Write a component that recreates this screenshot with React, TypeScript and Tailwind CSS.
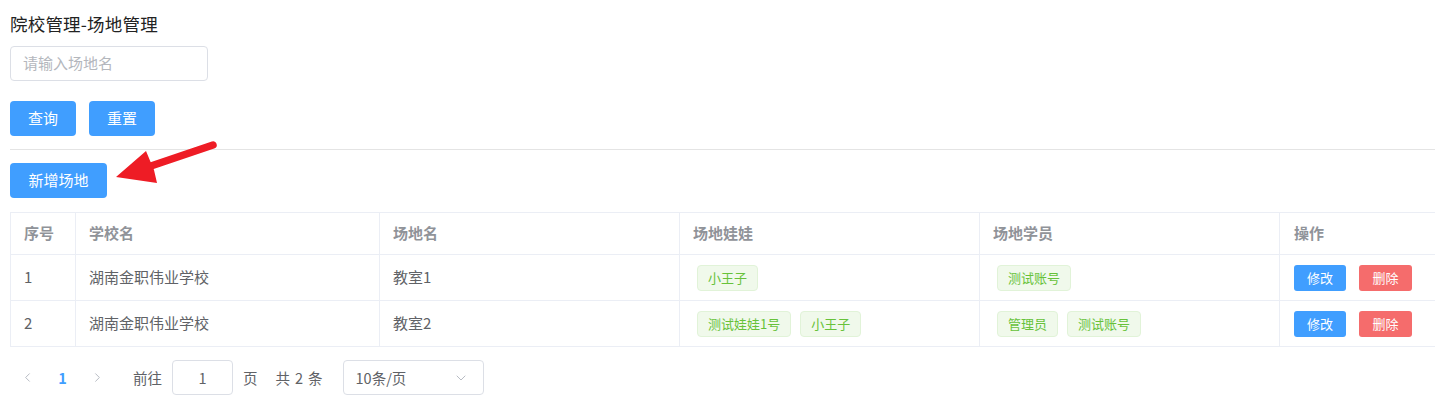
import { ChevronDown, ChevronLeft, ChevronRight } from "lucide-react"

interface Row {
  id: number
  school: string
  room: string
  dolls: string[]
  students: string[]
}

const rows: Row[] = [
  { id: 1, school: "湖南金职伟业学校", room: "教室1", dolls: ["小王子"], students: ["测试账号"] },
  { id: 2, school: "湖南金职伟业学校", room: "教室2", dolls: ["测试娃娃1号", "小王子"], students: ["管理员", "测试账号"] },
]

const font = { fontFamily: '"Noto Sans CJK SC", "Noto Sans", sans-serif' }

function Tag({ text }: { text: string }) {
  return (
    <span className="inline-flex h-[26px] items-center rounded-[4px] border border-[#e1f3d8] bg-[#f0f9eb] px-[10px] text-[13px] text-[#67c23a]">
      {text}
    </span>
  )
}

export default function App() {
  const cols = "grid grid-cols-[66px_304px_300px_300px_300px_200px]"
  const cell = "flex items-center border-r border-b border-[#ebeef5]"

  return (
    <div className="relative min-h-screen w-full overflow-hidden bg-white pl-[10px]" style={font}>
      <div className="pt-[13px] text-[17.5px] font-normal leading-[22px] tracking-[0.2px] text-[#222]">院校管理-场地管理</div>

      <div className="mt-[11px] flex h-[35px] w-[198px] items-center rounded-[4px] border border-[#dcdfe6] px-[12px] text-[15px] text-[#b4b7bd]">
        请输入场地名
      </div>

      <div className="mt-[20px] flex gap-[13px]">
        <button className="h-[35px] w-[66px] rounded-[4px] bg-[#409eff] text-[15px] text-white">查询</button>
        <button className="h-[35px] w-[66px] rounded-[4px] bg-[#409eff] text-[15px] text-white">重置</button>
      </div>

      <div className="mt-[13px] h-px bg-[#e4e4e4]" />

      <button className="mt-[13px] h-[35px] w-[97px] rounded-[4px] bg-[#409eff] text-[15px] text-white">新增场地</button>

      {/* table */}
      <div className="mt-[14px] w-[1470px] text-[15px] text-[#606266]">
        <div className={`${cols} h-[43px] border-t border-[#ebeef5] font-bold text-[#909399]`}>
          <div className={`${cell} border-l pl-[13px]`}>序号</div>
          <div className={`${cell} pl-[13px]`}>学校名</div>
          <div className={`${cell} pl-[13px]`}>场地名</div>
          <div className={`${cell} pl-[13px]`}>场地娃娃</div>
          <div className={`${cell} pl-[13px]`}>场地学员</div>
          <div className={`${cell} pl-[14px]`}>操作</div>
        </div>
        {rows.map((r) => (
          <div key={r.id} className={`${cols} h-[46px]`}>
            <div className={`${cell} border-l pl-[13px]`}>{r.id}</div>
            <div className={`${cell} pl-[13px]`}>{r.school}</div>
            <div className={`${cell} pl-[13px]`}>{r.room}</div>
            <div className={`${cell} gap-[9px] pl-[17px]`}>
              {r.dolls.map((d) => (
                <Tag key={d} text={d} />
              ))}
            </div>
            <div className={`${cell} gap-[9px] pl-[17px]`}>
              {r.students.map((s) => (
                <Tag key={s} text={s} />
              ))}
            </div>
            <div className={`${cell} gap-[13px] pl-[14px]`}>
              <button className="h-[26px] w-[52px] rounded-[3px] bg-[#409eff] text-[13px] text-white">修改</button>
              <button className="h-[26px] w-[53px] rounded-[3px] bg-[#f56c6c] text-[13px] text-white">删除</button>
            </div>
          </div>
        ))}
      </div>

      {/* pagination */}
      <div className="mt-[13px] flex h-[35px] items-center text-[14.5px] text-[#606266]">
        <div className="flex w-[35px] justify-center text-[#b8bcc4]">
          <ChevronLeft size={15} strokeWidth={1.6} />
        </div>
        <div className="flex w-[35px] justify-center font-bold text-[#409eff]">1</div>
        <div className="flex w-[35px] justify-center text-[#b8bcc4]">
          <ChevronRight size={15} strokeWidth={1.6} />
        </div>
        <span className="ml-[18px]">前往</span>
        <div className="ml-[10px] flex h-[35px] w-[61px] items-center justify-center rounded-[4px] border border-[#dcdfe6]">1</div>
        <span className="ml-[10px]">页</span>
        <span className="ml-[18px] flex gap-[5px]">
          <span>共</span>
          <span>2</span>
          <span>条</span>
        </span>
        <div className="ml-[20px] flex h-[35px] w-[141px] items-center justify-between rounded-[4px] border border-[#dcdfe6] pl-[12px] pr-[14px]">
          <span>10条/页</span>
          <ChevronDown size={16} strokeWidth={1.5} className="text-[#b8bcc4]" />
        </div>
      </div>

      {/* red annotation arrow */}
      <svg className="absolute left-[100px] top-[130px]" width="130" height="60" viewBox="0 0 130 60">
        <line x1="113" y1="15" x2="48" y2="37" stroke="#ee1c25" strokeWidth="7.5" strokeLinecap="round" />
        <polygon points="16,47 46,21 51,33 54,40 57,53" fill="#ee1c25" />
      </svg>
    </div>
  )
}
